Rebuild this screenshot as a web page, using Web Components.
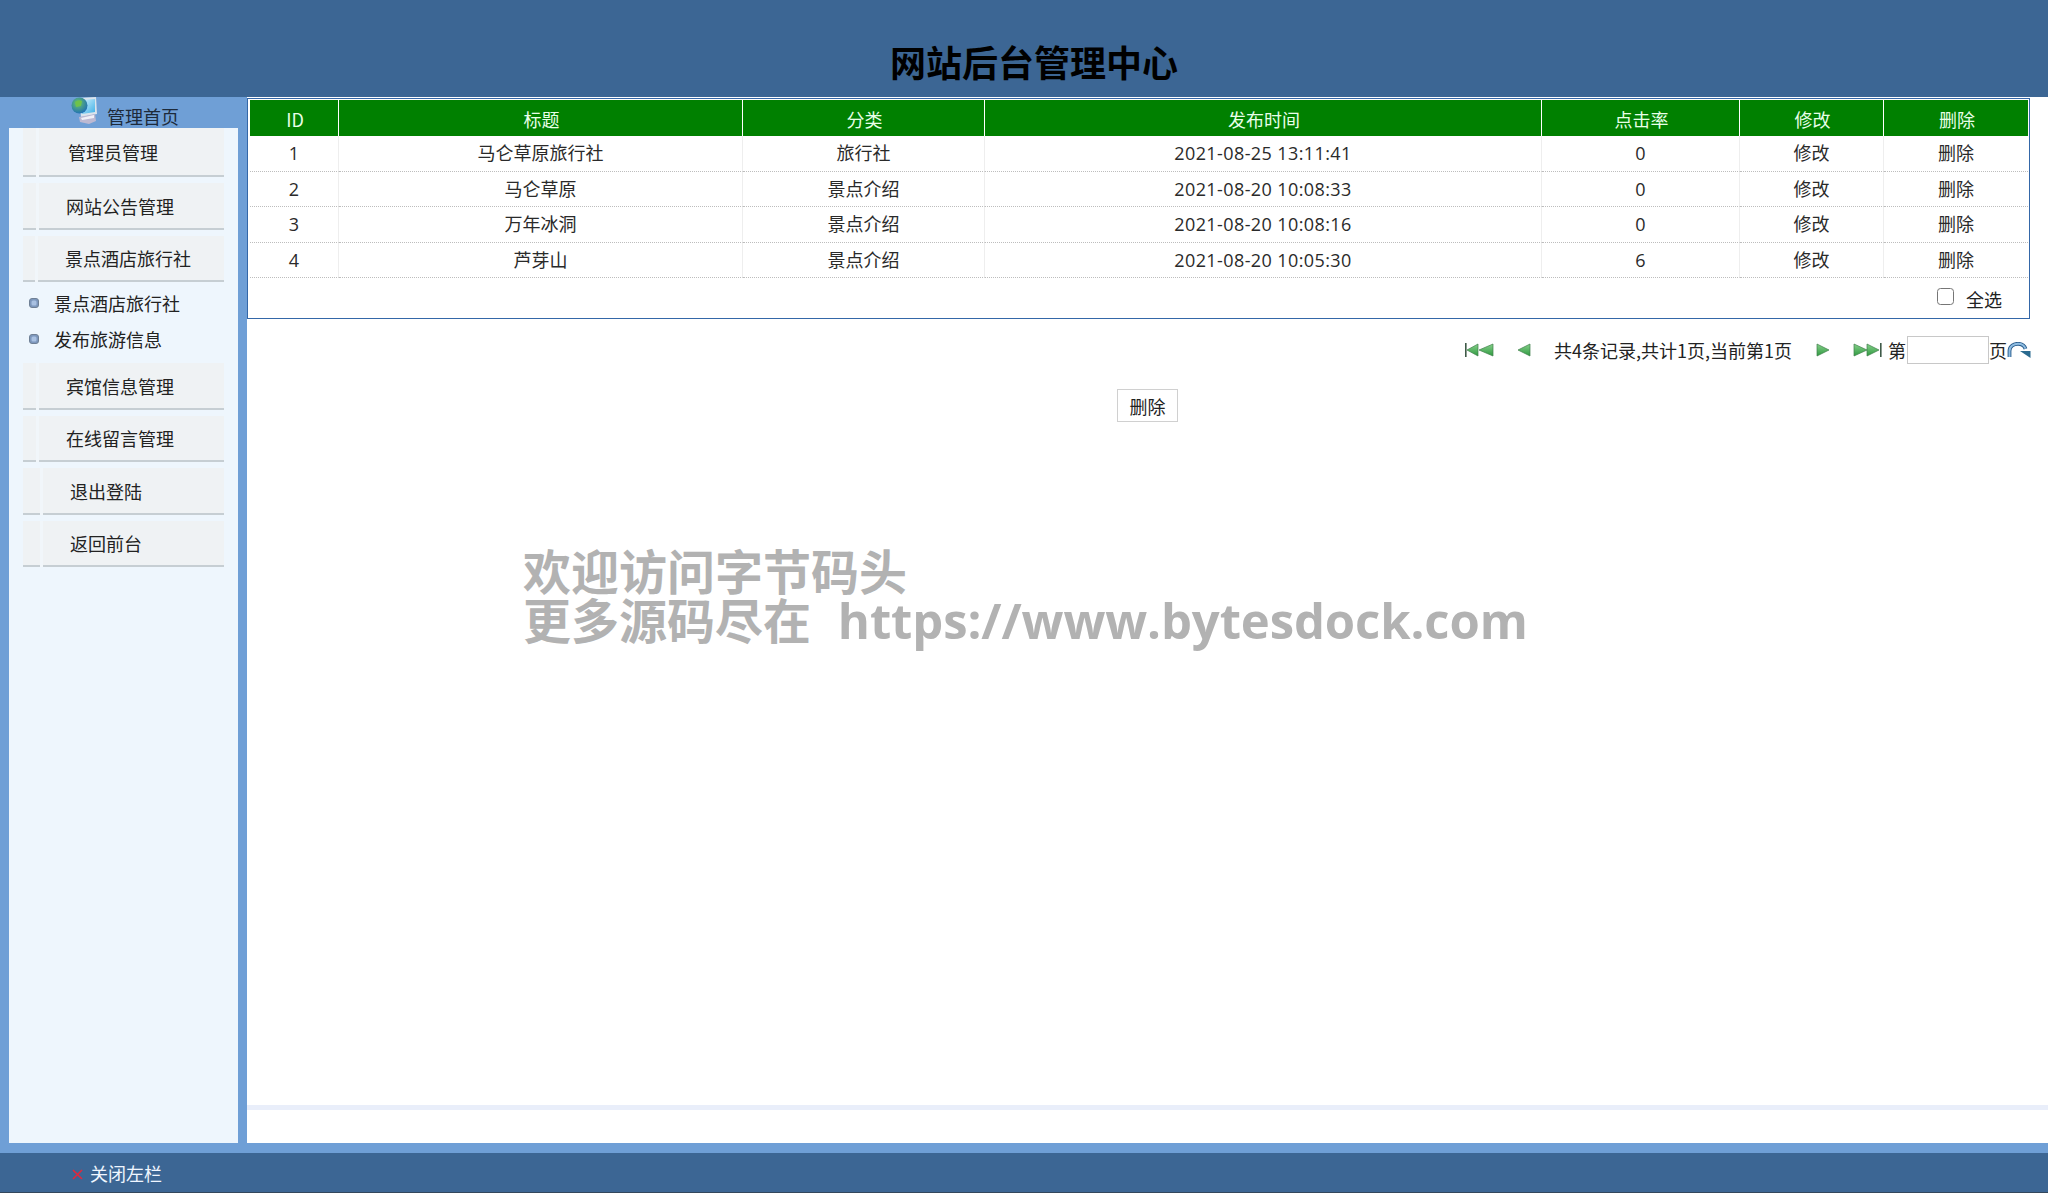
<!DOCTYPE html>
<html lang="zh">
<head>
<meta charset="utf-8">
<title>网站后台管理中心</title>
<style>
html,body{margin:0;padding:0;height:100%;background:#fff}
body{font:18px/1.3 "Noto Sans CJK SC","Noto Sans",sans-serif;color:#222;overflow:hidden}
</style>
</head>
<body>
<admin-app>
  <admin-header slot="header">网站后台管理中心</admin-header>
  <admin-sidebar slot="side" label="管理首页">
    <menu-row indent="45" notch="13" gap="3" h="49">管理员管理</menu-row>
    <menu-row indent="43" notch="13" gap="3" h="47" mt="6">网站公告管理</menu-row>
    <menu-row indent="42" notch="12" gap="3" h="46" mt="6">景点酒店旅行社</menu-row>
    <sub-link mt="4" h="36">景点酒店旅行社</sub-link>
    <sub-link h="35">发布旅游信息</sub-link>
    <menu-row indent="43" notch="13" gap="3" h="47" mt="6">宾馆信息管理</menu-row>
    <menu-row indent="43" notch="13" gap="3" h="46" mt="6">在线留言管理</menu-row>
    <menu-row indent="47" notch="17" gap="3" h="47" mt="6">退出登陆</menu-row>
    <menu-row indent="47" notch="17" gap="3" h="46" mt="6">返回前台</menu-row>
  </admin-sidebar>
  <admin-main slot="main">
    <data-grid></data-grid>
    <pager-bar></pager-bar>
    <action-button>删除</action-button>
  </admin-main>
  <admin-footer slot="footer">关闭左栏</admin-footer>
</admin-app>
<script>
function def(name, css, html, init){
  customElements.define(name, class extends HTMLElement{
    constructor(){
      super();
      const r=this.attachShadow({mode:'open'});
      r.innerHTML='<style>'+css+'</style>'+html;
    }
    connectedCallback(){ if(init) init(this,this.shadowRoot); }
  });
}
def('admin-app',`
  :host{display:grid;grid-template-columns:247px 1fr;grid-template-rows:97px 1046px 10px 40px;height:1193px;background:#6f9fd6}
  ::slotted(*){min-width:0}
  ::slotted(admin-header){grid-area:1/1/2/3}
  ::slotted(admin-sidebar){grid-area:2/1/3/2}
  ::slotted(admin-main){grid-area:2/2/3/3}
  ::slotted(admin-footer){grid-area:4/1/5/3}
`,`<slot name="header"></slot><slot name="side"></slot><slot name="main"></slot><slot name="footer"></slot>`);
def('admin-header',`
  :host{display:flex;justify-content:center;align-items:flex-end;background:#3c6694;box-sizing:border-box;padding:0 0 10px 20px;color:#000;font-size:36px;font-weight:700;line-height:52px}
`,`<slot></slot>`);
def('admin-sidebar',`
  :host{display:flex;flex-direction:column;height:100%;box-sizing:border-box}
  .top{height:31px;display:flex;justify-content:flex-start;padding-left:71px;gap:9px;align-items:flex-end;font-size:18px;color:#1d2a3a;line-height:24px;box-sizing:border-box}
  .top svg{display:block;margin-bottom:4px}
  .panel{flex:1;margin:0 9px;background:#eef6fd;padding:0 14px;}
`,`<div class="top">
  <svg width="27" height="28" viewBox="0 0 27 28">
    <defs><radialGradient id="g" cx=".4" cy=".35" r=".7"><stop offset="0" stop-color="#6ac46a"/><stop offset="1" stop-color="#1d6db8"/></radialGradient>
    <linearGradient id="mon" x1="0" y1="0" x2="1" y2="1"><stop offset="0" stop-color="#d6f2fe"/><stop offset="1" stop-color="#3fb0e6"/></linearGradient></defs>
    <path d="M8 2l17-1 1 17-16 3z" fill="#dbe4ec"/><path d="M10 4l14-1 0 13-13 2z" fill="url(#mon)"/>
    <path d="M8 21l16-3 1 7-7 3-9-2z" fill="#bcb9d2"/><path d="M10 22l13-3v3l-12 2z" fill="#f0f0f8"/>
    <circle cx="8.5" cy="9.5" r="8" fill="url(#g)"/><path d="M4 6q3-3 7-1l-1 5-5 1z" fill="#6fc24a"/>
  </svg><span>管理首页</span></div>
  <div class="panel"><slot></slot></div>`);
def('menu-row',`
  :host{box-sizing:border-box;width:201px;background:#eff2f4;position:relative;font-size:18px;color:#222;white-space:nowrap;display:flex;align-items:center;padding-top:2px;border-bottom:2px solid #c6ced3}
  i{position:absolute;top:0;bottom:-2px;width:3px;background:#f1f6fa}
`,`<i></i><slot></slot>`,(el,r)=>{
  el.style.height=el.getAttribute('h')+'px';
  el.style.marginTop=(el.getAttribute('mt')||0)+'px';
  el.style.paddingLeft=el.getAttribute('indent')+'px';
  r.querySelector('i').style.left=el.getAttribute('notch')+'px';
});
def('sub-link',`
  :host{display:flex;align-items:center;font-size:18px;color:#222;white-space:nowrap;padding-left:6px}
  svg{margin-right:15px;position:relative;top:-1px;flex:none}
`,`<svg width="10" height="10" viewBox="0 0 10 10"><rect x=".5" y=".5" width="9" height="9" rx="2.5" fill="#7d97bd" stroke="#6f8095"/><rect x="2.5" y="2.5" width="5" height="5" rx="1.5" fill="#a9c1e2"/></svg><slot></slot>`,
(el)=>{ el.style.marginTop=(el.getAttribute('mt')||0)+'px'; el.style.height=el.getAttribute('h')+'px'; });
def('admin-main',`
  :host{display:flex;flex-direction:column;background:#fff;position:relative;height:100%;box-sizing:border-box;padding-top:1px}
  .rule{margin-top:auto;margin-bottom:33px;height:5px;background:#e9eefa}
  .wm{position:absolute;left:276px;top:448px;font-size:48px;font-weight:700;line-height:49px;color:#b2b2b2;white-space:pre;font-family:"Noto Sans CJK SC","Open Sans",sans-serif}
  .wm b{font-family:"Open Sans",sans-serif;font-weight:700;font-size:49px;margin-left:5px;letter-spacing:-.1px}
`,`<slot></slot><div class="rule"></div><div class="wm">欢迎访问字节码头
更多源码尽在  <b>https://www.bytesdock.com</b></div>`);
def('data-grid',`
  :host{display:block;box-sizing:border-box;width:1783px;height:221px;border:1px solid #3467a8;padding:1px 1px 0 2px;background:#fff}
  table{border-collapse:separate;border-spacing:0;table-layout:fixed;width:1778px;font-size:18px}
  th{background:#008000;color:#e8ffe8;font-weight:400;height:36px;padding:2px 0 0 2px;border-right:1px solid #fff;box-sizing:border-box;line-height:34px}
  td{height:35.6px;padding:1px 0 1px;text-align:center;border-right:1px solid #eee;border-bottom:1px dotted #bdbdbd;box-sizing:border-box;color:#2a2a2a;font-family:"Open Sans","Noto Sans CJK SC",sans-serif;line-height:30px}
  td.d{letter-spacing:.4px}
  tr>*:last-child{border-right:0}
  .all{display:flex;justify-content:flex-end;align-items:center;height:36px;padding-right:26px;font-size:18px;gap:12px}
  .all span{position:relative;top:3px}
  .cb{width:17px;height:17px;border:1.5px solid #767676;border-radius:3.5px;box-sizing:border-box;appearance:none;margin:0;background:#fff;position:relative;top:0}
`,`<table>
<colgroup><col style="width:89px"><col style="width:404px"><col style="width:242px"><col style="width:557px"><col style="width:198px"><col style="width:144px"><col style="width:144px"></colgroup>
<thead><tr><th>ID</th><th>标题</th><th>分类</th><th>发布时间</th><th>点击率</th><th>修改</th><th>删除</th></tr></thead>
<tbody>
<tr><td>1</td><td>马仑草原旅行社</td><td>旅行社</td><td class="d">2021-08-25 13:11:41</td><td>0</td><td>修改</td><td>删除</td></tr>
<tr><td>2</td><td>马仑草原</td><td>景点介绍</td><td class="d">2021-08-20 10:08:33</td><td>0</td><td>修改</td><td>删除</td></tr>
<tr><td>3</td><td>万年冰洞</td><td>景点介绍</td><td class="d">2021-08-20 10:08:16</td><td>0</td><td>修改</td><td>删除</td></tr>
<tr><td>4</td><td>芦芽山</td><td>景点介绍</td><td class="d">2021-08-20 10:05:30</td><td>6</td><td>修改</td><td>删除</td></tr>
</tbody></table>
<div class="all"><input class="cb" type="checkbox" aria-label="全选"><span>全选</span></div>`);
const tri=(d,id)=>`<path d="${d}" fill="url(#${id})" stroke="#3f7f4a" stroke-width=".7"/>`;
const grad=id=>`<defs><linearGradient id="${id}" x1="0" y1="0" x2="0" y2="1"><stop offset="0" stop-color="#86d08a"/><stop offset="1" stop-color="#2f9a40"/></linearGradient></defs>`;
def('pager-bar',`
  :host{display:flex;align-items:center;height:36px;margin-top:13px;font-size:18px;color:#222;white-space:nowrap;padding-left:1218px;box-sizing:border-box}
  svg{flex:none;display:block;position:relative;top:0}
  span{position:relative;top:1px}
  .in{width:82px;height:28px;border:1px solid #c8c8c8;box-sizing:border-box;margin:0 0 0 1px;background:#fff;padding:0}
`,`
<svg width="30" height="14" viewBox="0 0 30 14">${grad('p1')}<rect x="0" y="0" width="1.6" height="14" fill="#3f5a48"/>${tri('M2 7l11-6v12z','p1')}${tri('M14 7l14-6v12z','p1')}</svg>
<svg style="margin-left:22px" width="15" height="14" viewBox="0 0 15 14">${grad('p2')}${tri('M1 7l12-6v12z','p2')}</svg>
<span style="margin-left:22px">共4条记录,共计1页,当前第1页</span>
<svg style="margin-left:23px" width="15" height="14" viewBox="0 0 15 14">${grad('p3')}${tri('M14 7L2 1v12z','p3')}</svg>
<svg style="margin-left:22px" width="30" height="14" viewBox="0 0 30 14">${grad('p4')}${tri('M15 7L2 1v12z','p4')}${tri('M27 7L15 1v12z','p4')}<rect x="28" y="0" width="1.6" height="14" fill="#3f5a48"/></svg>
<span style="margin-left:6px">第</span><input class="in" aria-label="页码"><span>页</span>
<svg style="margin-left:0" width="24" height="17" viewBox="0 0 24 17"><path d="M2.5 15V9C2.5 4 7 1.8 11 1.8c3.5 0 6.5 2 7.5 5" fill="none" stroke="#2a5c8c" stroke-width="3.8"/><path d="M2.5 15V9C2.5 4 7 1.8 11 1.8c3.5 0 6.5 2 7.5 5" fill="none" stroke="#8fbde2" stroke-width="1.9"/><path d="M13 9h10.5V16z" fill="#2a6a8f"/></svg>
`);
def('action-button',`
  :host{display:block;margin:21px 0 0 870px;width:61px;height:33px;box-sizing:border-box;border:1px solid #d0d0d0;background:#fff;text-align:center;font-size:18px;line-height:32px;color:#222}
`,`<slot></slot>`);
def('admin-footer',`
  :host{display:flex;align-items:center;background:#3c6694;color:#f0f6ff;font-size:18px;padding:2px 0 0 72px;gap:7px;border-bottom:1px solid #33475c;box-sizing:border-box}
  svg{flex:none;position:relative;top:1px}
`,`<svg width="11" height="11" viewBox="0 0 11 11"><path d="M1 1l9 9M10 1l-9 9" stroke="#e2283c" stroke-width="1.6"/></svg><slot></slot>`);
</script>
</body>
</html>
